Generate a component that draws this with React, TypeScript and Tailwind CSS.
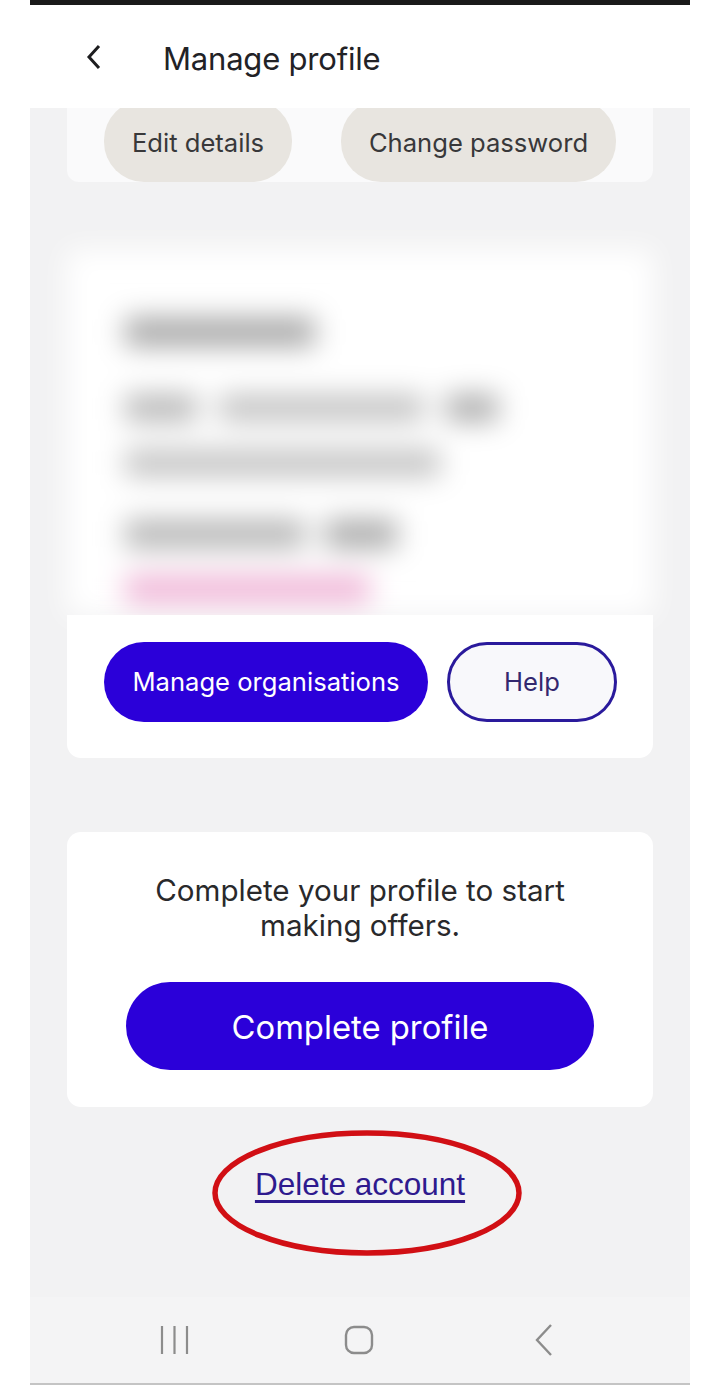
export default function App() {
  return (
    <div className="relative w-[720px] h-[1388px] bg-white overflow-hidden" style={{ fontFamily: "Inter, 'Liberation Sans', sans-serif" }}>
      <div className="mx-[30px] w-[660px] h-[1388px] flex flex-col">
        <div className="h-[5px] bg-[#1a1a1a] shrink-0" />
        <header className="h-[103px] shrink-0 bg-white flex items-center relative z-10">
          <svg className="ml-[56px] mt-[1px]" width="16" height="26" viewBox="0 0 16 26" fill="none" stroke="#1d1d1f" strokeWidth="3">
            <path d="M13 2 L3 13 L13 24" />
          </svg>
          <span className="ml-[61px] mt-[4px] text-[31px] leading-[40px] text-[#222226] tracking-[-0.2px]">Manage profile</span>
        </header>

        <main className="flex-1 bg-[#f2f2f3] flex flex-col px-[37px]">
          <section className="h-[74px] bg-[#fafafb] rounded-b-[12px] flex gap-[49px] pl-[37px]">
            <div className="w-[188px] h-[82px] -mt-[8px] rounded-[40px] bg-[#e8e5e0] flex items-center justify-center pt-[4px] text-[25.6px] text-[#38383a]">Edit details</div>
            <div className="w-[275px] h-[82px] -mt-[8px] rounded-[40px] bg-[#e8e5e0] flex items-center justify-center pt-[4px] text-[25.6px] text-[#38383a]">Change password</div>
          </section>

          <section className="mt-[68px] h-[508px] flex flex-col">
            <div className="h-[365px] bg-white blur-[14px] pl-[58px] pt-[68px] flex flex-col shrink-0">
              <div className="h-[28px] w-[190px] bg-[#a4a4a4] rounded" />
              <div className="mt-[49px] h-[26px] flex gap-[22px]">
                <div className="w-[72px] bg-[#b4b4b4] rounded" />
                <div className="w-[205px] bg-[#c0c0c0] rounded" />
                <div className="w-[52px] bg-[#a8a8a8] rounded" />
              </div>
              <div className="mt-[29px] h-[26px] w-[315px] bg-[#c0c0c0] rounded" />
              <div className="mt-[44px] h-[28px] flex gap-[20px]">
                <div className="w-[180px] bg-[#b4b4b4] rounded" />
                <div className="w-[72px] bg-[#a8a8a8] rounded" />
              </div>
              <div className="mt-[28px] h-[26px] w-[245px] bg-[#eeb0d4] rounded" />
            </div>
            <div className="relative flex-1 bg-white rounded-b-[14px] flex gap-[19px] pl-[37px] pt-[27px]">
              <div className="w-[324px] h-[80px] rounded-[40px] bg-[#2b00d9] text-white text-[25.6px] flex items-center justify-center">Manage organisations</div>
              <div className="w-[170px] h-[80px] rounded-[40px] border-[3px] border-[#2a1a9c] bg-[#f8f8fb] text-[#33286f] text-[25.6px] flex items-center justify-center">Help</div>
            </div>
          </section>

          <section className="mt-[74px] h-[275px] bg-white rounded-[14px] flex flex-col items-center pt-[41px]">
            <p className="text-[29.6px] leading-[35px] text-[#29292b] text-center">Complete your profile to start<br />making offers.</p>
            <div className="mt-[39px] w-[468px] h-[88px] rounded-[44px] bg-[#2b00d9] text-white text-[32.8px] flex items-center justify-center pt-[4px]">Complete profile</div>
          </section>

          <div className="mt-[57px] text-center text-[31.5px] leading-[40px] text-[#2e1a8e] underline underline-offset-[5px]" style={{ fontFamily: "'Liberation Sans', sans-serif" }}>Delete account</div>
        </main>

        <nav className="h-[86px] shrink-0 bg-[#f4f4f5] flex items-center">
          <svg className="ml-[129px]" width="32" height="30" viewBox="0 0 32 30" fill="none" stroke="#8c8c8c" strokeWidth="2.2">
            <path d="M3 1V29M15.5 1V29M28 1V29" />
          </svg>
          <svg className="ml-[153px]" width="30" height="30" viewBox="0 0 30 30" fill="none" stroke="#8c8c8c" strokeWidth="2.4">
            <rect x="2" y="2" width="26" height="26" rx="8" />
          </svg>
          <svg className="ml-[160px]" width="20" height="32" viewBox="0 0 20 32" fill="none" stroke="#8c8c8c" strokeWidth="2.4">
            <path d="M17 1 L3 16 L17 31" />
          </svg>
        </nav>
        <div className="h-[2px] shrink-0 bg-[#c4c4c4]" />
        <div className="h-[3px] shrink-0 bg-white" />
      </div>

      <svg className="absolute left-[209px] top-[1127px]" width="316" height="132" viewBox="0 0 316 132" fill="none">
        <ellipse cx="158" cy="66" rx="152" ry="60" stroke="#d10f14" strokeWidth="5.5" />
      </svg>
    </div>
  );
}
